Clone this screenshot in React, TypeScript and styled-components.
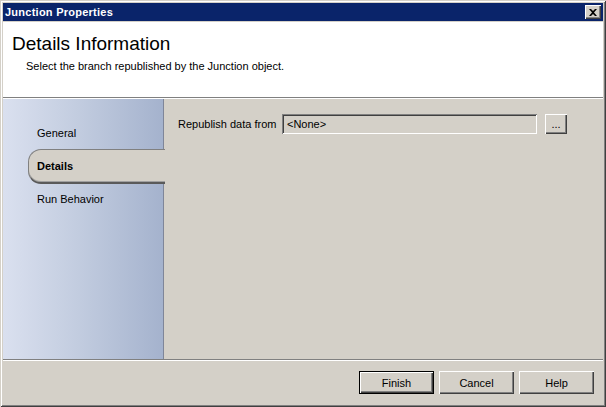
import React from "react";
import styled, { createGlobalStyle, css } from "styled-components";

const Global = createGlobalStyle`
  html, body { margin: 0; padding: 0; background: #d4d0c8; }
  body { font-family: Tahoma, "Liberation Sans", Arial, sans-serif; font-size: 11px; color: #000; }
  * { box-sizing: border-box; }
`;

const Window = styled.div`
  width: 606px;
  height: 407px;
  background: #d4d0c8;
  display: flex;
  flex-direction: column;
  padding: 3px;
  box-shadow: inset 1px 1px 0 #d4d0c8, inset -1px -1px 0 #404040,
    inset 2px 2px 0 #ffffff, inset -2px -2px 0 #808080;
`;

const TitleBar = styled.div`
  height: 18px;
  background: #0a246a;
  display: flex;
  align-items: center;
  justify-content: space-between;
  padding: 0 2px 0 2px;
  color: #fff;
  font-weight: bold;
  font-size: 11px;
  letter-spacing: 0.25px;
`;

const CloseButton = styled.div`
  width: 16px;
  height: 14px;
  background: #d4d0c8;
  display: flex;
  align-items: center;
  justify-content: center;
  padding-right: 1px;
  box-shadow: inset 1px 1px 0 #ffffff, inset -1px -1px 0 #404040,
    inset -2px -2px 0 #808080;
`;

const Header = styled.div`
  height: 75px;
  margin-top: 1px;
  background: #fff;
  padding: 11px 0 0 9px;
`;

const HeaderTitle = styled.div`
  font-size: 19px;
  line-height: 22px;
`;

const HeaderSub = styled.div`
  margin-top: 5px;
  padding-left: 14px;
  font-size: 11px;
`;

const Separator = styled.div`
  height: 2px;
  border-top: 1px solid #808080;
  border-bottom: 1px solid #ffffff;
`;

const Main = styled.div`
  height: 260px;
  display: flex;
`;

const Sidebar = styled.div`
  width: 161px;
  display: flex;
  flex-direction: column;
  background: linear-gradient(to right, #dae0ef 0%, #c3cde0 45%, #a4b2cd 100%);
`;

const NavSegment = styled.div<{ $grow?: boolean; $height?: number }>`
  border-right: 1px solid #7f8699;
  display: flex;
  flex-direction: column;
  padding-left: 34px;
  ${(p) => (p.$grow ? css`flex: 1;` : css`height: ${p.$height}px;`)}
`;

const NavItem = styled.div<{ $top: number }>`
  margin-top: ${(p) => p.$top}px;
  line-height: 14px;
`;

const TabRow = styled.div`
  height: 35px;
  display: flex;
  padding-left: 25px;
  margin-right: -1px;
`;

const Tab = styled.div`
  flex: 1;
  background: #d4d0c8;
  border-top: 1px solid #808080;
  border-left: 1px solid #808080;
  border-bottom: 2px solid #5a5a5a;
  border-radius: 13px 0 0 13px;
  box-shadow: inset 0 -1px 0 #a0a0a0;
  display: flex;
  align-items: center;
  padding-left: 8px;
  font-weight: bold;
`;

const Content = styled.div`
  flex: 1;
  padding: 15px 0 0 14px;
`;

const FieldRow = styled.div`
  display: flex;
  align-items: center;
  height: 20px;
`;

const FieldLabel = styled.div`
  width: 104px;
`;

const ReadOnlyInput = styled.div`
  width: 255px;
  height: 20px;
  display: flex;
  align-items: center;
  padding-left: 5px;
  background: #d4d0c8;
  box-shadow: inset 1px 1px 0 #808080, inset -1px -1px 0 #ffffff,
    inset 2px 2px 0 #404040, inset -2px -2px 0 #d4d0c8;
`;

const Button = styled.div<{ $default?: boolean; $w: number; $h: number }>`
  width: ${(p) => p.$w}px;
  height: ${(p) => p.$h}px;
  display: flex;
  align-items: center;
  justify-content: center;
  background: #d4d0c8;
  box-shadow: inset 1px 1px 0 #ffffff, inset -1px -1px 0 #404040,
    inset -2px -2px 0 #808080;
  ${(p) =>
    p.$default &&
    css`
      box-shadow: inset 0 0 0 1px #000, inset 2px 2px 0 #ffffff,
        inset -2px -2px 0 #404040, inset -3px -3px 0 #808080;
    `}
`;

const BrowseButton = styled(Button)`
  margin-left: 8px;
  padding-bottom: 1px;
`;

const Footer = styled.div`
  flex: 1;
  display: flex;
  justify-content: flex-end;
  align-items: flex-start;
  gap: 5px;
  padding: 10px 9px 0 0;
`;

export default function App() {
  return (
    <>
      <Global />
      <Window>
        <TitleBar>
          <span>Junction Properties</span>
          <CloseButton>
            <svg width="8" height="7" viewBox="0 0 8 7">
              <path d="M0 0h2l2 2 2-2h2L5 3.5 8 7H6L4 5 2 7H0l3-3.5z" fill="#000" />
            </svg>
          </CloseButton>
        </TitleBar>
        <Header>
          <HeaderTitle>Details Information</HeaderTitle>
          <HeaderSub>Select the branch republished by the Junction object.</HeaderSub>
        </Header>
        <Separator />
        <Main>
          <Sidebar>
            <NavSegment $height={50}>
              <NavItem $top={27}>General</NavItem>
            </NavSegment>
            <TabRow>
              <Tab>Details</Tab>
            </TabRow>
            <NavSegment $grow>
              <NavItem $top={8}>Run Behavior</NavItem>
            </NavSegment>
          </Sidebar>
          <Content>
            <FieldRow>
              <FieldLabel>Republish data from</FieldLabel>
              <ReadOnlyInput>&lt;None&gt;</ReadOnlyInput>
              <BrowseButton $w={22} $h={20}>...</BrowseButton>
            </FieldRow>
          </Content>
        </Main>
        <Separator />
        <Footer>
          <Button $default $w={75} $h={23}>Finish</Button>
          <Button $w={75} $h={23}>Cancel</Button>
          <Button $w={75} $h={23}>Help</Button>
        </Footer>
      </Window>
    </>
  );
}
